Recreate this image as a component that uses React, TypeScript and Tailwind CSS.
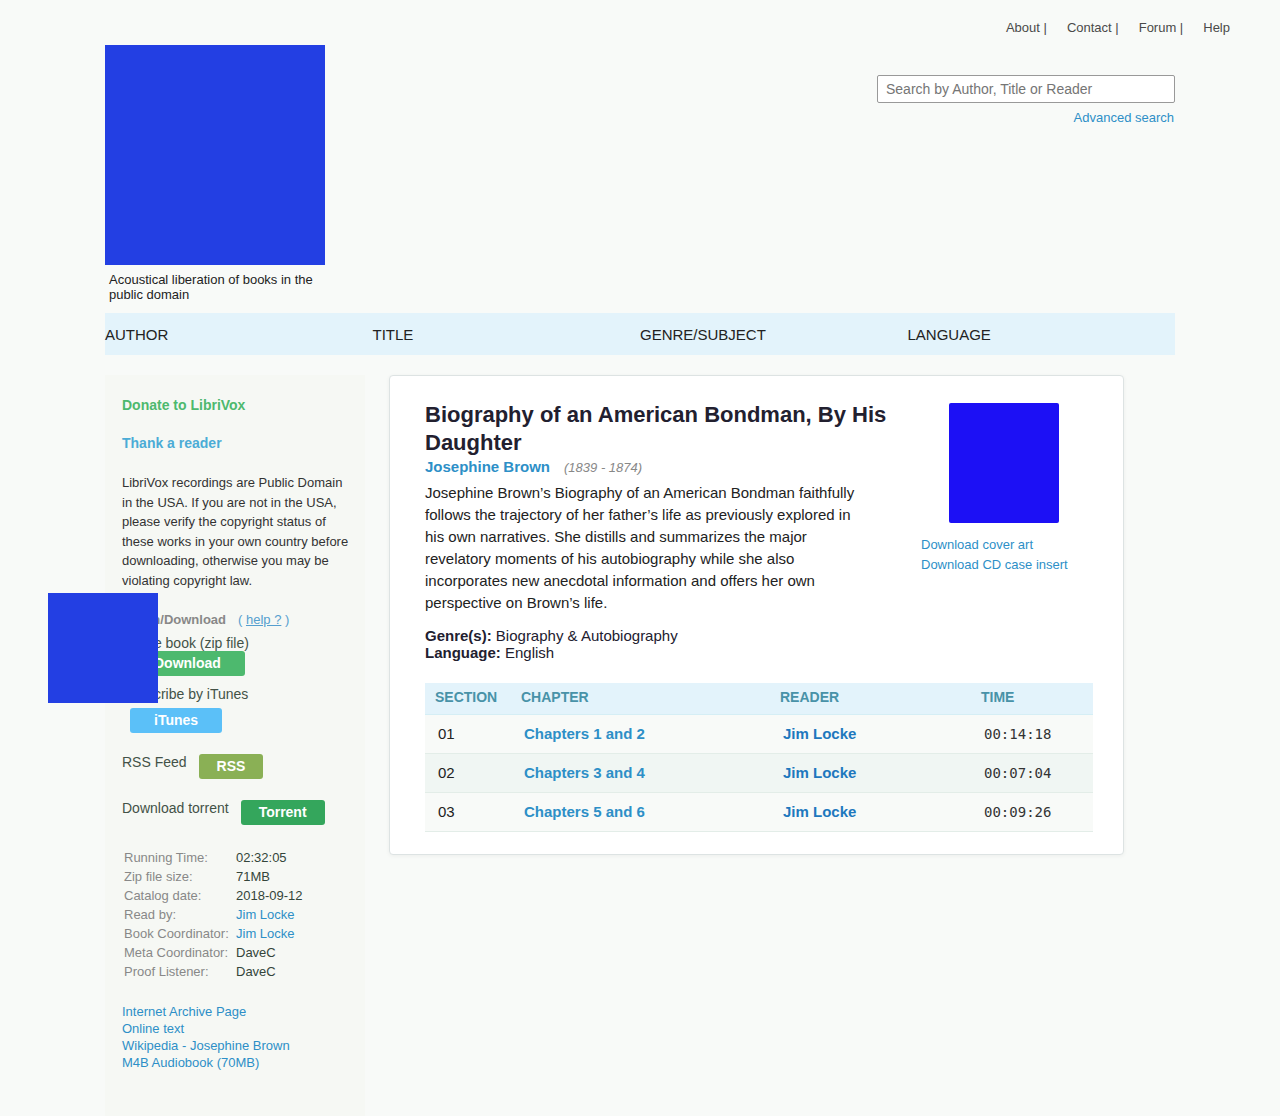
const topLinks = ["About", "Contact", "Forum"];
const catalogTabs = ["AUTHOR", "TITLE", "GENRE/SUBJECT", "LANGUAGE"];

const details = [
  { label: "Running Time:", value: "02:32:05" },
  { label: "Zip file size:", value: "71MB" },
  { label: "Catalog date:", value: "2018-09-12" },
  { label: "Read by:", value: "Jim Locke", link: true },
  { label: "Book Coordinator:", value: "Jim Locke", link: true },
  { label: "Meta Coordinator:", value: "DaveC" },
  { label: "Proof Listener:", value: "DaveC" },
];

const externalLinks = [
  "Internet Archive Page",
  "Online text",
  "Wikipedia - Josephine Brown",
  "M4B Audiobook (70MB)",
];

const chapters = [
  { section: "01", title: "Chapters 1 and 2", reader: "Jim Locke", time: "00:14:18" },
  { section: "02", title: "Chapters 3 and 4", reader: "Jim Locke", time: "00:07:04" },
  { section: "03", title: "Chapters 5 and 6", reader: "Jim Locke", time: "00:09:26" },
];

const buttonBase = "rounded-[3px] h-[25px] pb-[2px] text-sm font-bold text-white text-center";

function Header() {
  return (
    <header>
      <nav className="flex justify-end gap-5 pt-5 pr-[50px] text-[13px] leading-[15px] text-[#4a4a4a]">
        {topLinks.map((l) => (
          <span key={l}>
            <a href="#">{l}</a> |
          </span>
        ))}
        <a href="#">Help</a>
      </nav>
      <div className="mx-auto mt-[10px] flex max-w-[1070px] items-start justify-between">
        <div className="w-[220px]">
          <a href="#" aria-label="Home" className="block h-[220px] bg-[#233fe3]" />
          <p className="mt-[7px] pl-1 text-[13px] leading-[15px] text-[#222]">
            Acoustical liberation of books in the public domain
          </p>
        </div>
        <form className="mt-[30px] flex w-[298px] flex-col items-end">
          <input
            type="search"
            aria-label="Search by Author, Title or Reader"
            placeholder="Search by Author, Title or Reader"
            className="h-7 w-full rounded-[2px] border border-[#999] bg-white px-2 text-sm placeholder:text-[#757575]"
          />
          <a href="#" className="mt-[7px] pr-px text-[13px] leading-[15px] text-[#2d8fc7]">
            Advanced search
          </a>
        </form>
      </div>
    </header>
  );
}

function Sidebar() {
  return (
    <aside className="w-[260px] shrink-0 bg-[#f6f8f4] px-[17px] pt-[22px] pb-[45px] text-sm leading-4 text-[#435247]">
      <a href="#" className="block font-bold text-[#4db96e]">Donate to LibriVox</a>
      <a href="#" className="mt-[22px] block font-bold text-[#4bacd6]">Thank a reader</a>
      <p className="-mr-1 mt-[22px] text-[13px] leading-normal text-[#333]">
        LibriVox recordings are Public Domain in the USA. If you are not in the USA, please verify the
        copyright status of these works in your own country before downloading, otherwise you may be
        violating copyright law.
      </p>

      <section className="relative mt-[22px]">
        <div className="flex gap-3 text-[13px] leading-[15px]">
          <h4 className="font-bold text-[#888]">Listen/Download</h4>
          <span className="text-[#559fcf]">
            ( <a href="#" className="underline">help ?</a> )
          </span>
        </div>
        <p className="mt-2">Whole book (zip file)</p>
        <button type="button" className={`${buttonBase} ml-2 block bg-[#4db96e] px-6`}>Download</button>
        <p className="mt-[10px]">Subscribe by iTunes</p>
        <button type="button" className={`${buttonBase} ml-2 mt-[6px] block bg-[#5bc0f8] px-6`}>iTunes</button>
        <div className="mt-[21px] flex items-start gap-3">
          <span>RSS Feed</span>
          <button type="button" className={`${buttonBase} bg-[#8ab055] px-[18px]`}>RSS</button>
        </div>
        <div className="mt-[21px] flex items-start gap-3">
          <span>Download torrent</span>
          <button type="button" className={`${buttonBase} bg-[#34a65c] px-[18px]`}>Torrent</button>
        </div>
        <div className="absolute -left-[74px] -top-[19px] size-[110px] bg-[#233fe3]" />
      </section>

      <table className="ml-[2px] mt-[23px] text-[13px] leading-[19px]">
        <tbody>
          {details.map((d) => (
            <tr key={d.label}>
              <th scope="row" className="w-[112px] p-0 text-left font-normal whitespace-nowrap text-[#888]">
                {d.label}
              </th>
              <td className={d.link ? "p-0 text-[#2d8fc7]" : "p-0 text-[#34453a]"}>
                {d.link ? <a href="#">{d.value}</a> : d.value}
              </td>
            </tr>
          ))}
        </tbody>
      </table>

      <ul className="mt-[22px] text-[13px] leading-[17px] text-[#2d8fc7]">
        {externalLinks.map((l) => (
          <li key={l}>
            <a href="#">{l}</a>
          </li>
        ))}
      </ul>
    </aside>
  );
}

function BookCard() {
  return (
    <main className="mr-[51px] min-w-0 flex-1 self-start rounded border border-[#dde3e3] bg-white pt-[25px] pr-[30px] pb-[22px] pl-[35px] shadow-[0_1px_4px_rgba(0,0,0,0.05)]">
      <div className="flex items-start justify-between">
        <div className="min-w-0 flex-1 text-[15px] text-[#222]">
          <h1 className="text-[22px] leading-7 font-bold text-[#22202f]">
            Biography of an American Bondman, By His Daughter
          </h1>
          <p className="flex items-baseline gap-[14px] leading-5">
            <a href="#" className="font-bold text-[#2d8fc7]">Josephine Brown</a>
            <span className="text-[13px] text-[#888] italic">(1839 - 1874)</span>
          </p>
          <p className="mt-1 max-w-[440px] leading-[22px]">
            Josephine Brown’s Biography of an American Bondman faithfully follows the trajectory of her
            father’s life as previously explored in his own narratives. She distills and summarizes the major
            revelatory moments of his autobiography while she also incorporates new anecdotal information and
            offers her own perspective on Brown’s life.
          </p>
          <div className="mt-[13px] leading-[17px] text-[#22202f]">
            <p><b>Genre(s):</b> Biography &amp; Autobiography</p>
            <p><b>Language:</b> English</p>
          </div>
        </div>
        <div className="mr-[6px] w-[166px] shrink-0 pt-[2px] text-[13px] leading-5 text-[#2d8fc7]">
          <div className="mx-auto mb-3 h-[120px] w-[110px] rounded-[2px] bg-[#1c10f5]" />
          <a href="#" className="block">Download cover art</a>
          <a href="#" className="block">Download CD case insert</a>
        </div>
      </div>

      <table className="mt-[22px] w-full table-fixed text-left text-[15px]">
        <thead>
          <tr className="h-[31px] border-b border-[#d5eef5] bg-[#e3f3fb] text-sm text-[#4892a8]">
            <th className="w-[86px] px-[10px] pt-0 pb-[2px]">SECTION</th>
            <th className="w-[259px] px-[10px] pt-0 pb-[2px]">CHAPTER</th>
            <th className="w-[201px] px-[10px] pt-0 pb-[2px]">READER</th>
            <th className="px-[10px] pt-0 pb-[2px]">TIME</th>
          </tr>
        </thead>
        <tbody>
          {chapters.map((c) => (
            <tr key={c.section} className="h-[39px] border-b border-[#e3ede8] bg-[#f8faf8] even:bg-[#f0f6f3]">
              <td className="px-[13px] pt-[2px] text-[#222]">{c.section}</td>
              <td className="px-[13px] pt-[2px] font-bold"><a href="#" className="text-[#2d8fc7]">{c.title}</a></td>
              <td className="px-[13px] pt-[2px] font-bold"><a href="#" className="text-[#1e78be]">{c.reader}</a></td>
              <td className="px-[13px] font-['DejaVu_Sans_Mono',monospace] text-sm text-[#333]">{c.time}</td>
            </tr>
          ))}
        </tbody>
      </table>
    </main>
  );
}

export default function App() {
  return (
    <div className="min-h-screen bg-[#f8faf8] font-['Liberation_Sans',Arial,sans-serif]">
      <Header />
      <div className="mx-auto max-w-[1070px]">
        <nav className="mt-[11px] grid grid-cols-4 bg-[#e3f3fb] pt-3 pb-[10px] text-[15px] leading-5 text-[#222]">
          {catalogTabs.map((t) => (
            <a key={t} href="#">{t}</a>
          ))}
        </nav>
        <div className="mt-5 flex gap-6">
          <Sidebar />
          <BookCard />
        </div>
      </div>
    </div>
  );
}
